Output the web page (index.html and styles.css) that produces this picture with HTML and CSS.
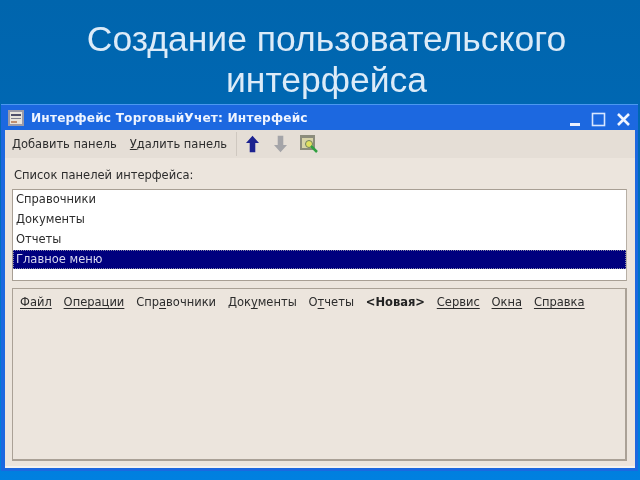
FILE: index.html
```html
<!DOCTYPE html>
<html lang="ru">
<head>
<meta charset="utf-8">
<title>Создание пользовательского интерфейса</title>
<link rel="stylesheet" href="styles.css">
</head>
<body>
<div class="slide">
  <h1 class="slide-title">Создание пользовательского интерфейса</h1>
  <div class="window">
    <div class="titlebar">
      <svg class="app-icon" width="16" height="16" viewBox="0 0 16 16"><rect width="16" height="16" fill="#9a9aa8"/><rect x="2" y="2" width="12" height="12" fill="#e8e4dc"/><rect x="3" y="4" width="10" height="2" fill="#50506a"/><rect x="3" y="8" width="10" height="1" fill="#80808c"/><rect x="3" y="11" width="6" height="2" fill="#c09070"/></svg>
      <span class="titlebar-text">Интерфейс ТорговыйУчет: Интерфейс</span>
      <div class="win-controls">
        <svg width="76" height="22" viewBox="0 0 76 22"><rect x="11" y="16" width="10" height="3" fill="#e8f0ff"/><rect x="33.5" y="6.5" width="12" height="12" fill="none" stroke="#d8e6ff" stroke-width="1.6"/><path d="M59 7 L70 18 M70 7 L59 18" stroke="#f0f5ff" stroke-width="2.6"/></svg>
      </div>
    </div>
    <div class="client">
      <div class="toolbar">
        <span class="tool"><u>Д</u>обавить панель</span>
        <span class="tool"><u>У</u>далить панель</span>
        <span class="sep"></span>
        <svg class="tbicon" width="13" height="18" viewBox="0 0 14 18"><path d="M7 0 L14 8 H10 V18 H4 V8 H0 Z" fill="#1c2290"/></svg>
        <svg class="tbicon" width="13" height="18" viewBox="0 0 14 18"><path d="M7 18 L14 10 H10 V0 H4 V10 H0 Z" fill="#a4a4a8"/></svg>
        <svg class="tbicon" width="20" height="20" viewBox="0 0 20 20"><rect x="1" y="1" width="15" height="15" fill="#8c8c7c"/><rect x="3" y="4" width="11" height="10" fill="#d8d4a8"/><circle cx="10" cy="10" r="3.5" fill="#e0e060" stroke="#708060"/><path d="M12 12 L18 18" stroke="#30a040" stroke-width="2.5"/></svg>
      </div>
      <div class="list-section">
        <div class="list-label">Список панелей интерфейса:</div>
        <div class="listbox">
          <div class="list-item">Справочники</div>
          <div class="list-item">Документы</div>
          <div class="list-item">Отчеты</div>
          <div class="list-item selected">Главное меню</div>
        </div>
      </div>
      <div class="menu-panel">
        <span class="menu-item">Файл</span>
        <span class="menu-item">Операции</span>
        <span class="menu-item plain">Спр<u>а</u>вочники</span>
        <span class="menu-item plain">Док<u>у</u>менты</span>
        <span class="menu-item plain">О<u>т</u>четы</span>
        <span class="menu-item new">&lt;Новая&gt;</span>
        <span class="menu-item">Сервис</span>
        <span class="menu-item">Окна</span>
        <span class="menu-item">Справка</span>
      </div>
    </div>
  </div>
</div>
</body>
</html>
```

FILE: styles.css
```css
* { box-sizing: border-box; }
html, body { margin: 0; padding: 0; }
body { width: 640px; height: 480px; overflow: hidden; }
.slide {
  width: 640px; height: 480px;
  display: flex; flex-direction: column;
  background: linear-gradient(180deg, #0065ad 0%, #0068b4 30%, #0080e0 100%);
  font-family: "Liberation Sans", Arial, sans-serif;
}
.slide-title {
  margin: 0; height: 104px; padding-top: 19px;
  font-size: 35.5px; line-height: 41px; font-weight: 400;
  color: #dcebf8; text-align: center;
  padding-left: 80px; padding-right: 67px;
  filter: blur(0.3px);
}
.window {
  margin-left: 1px; width: 637px; height: 367px;
  background: #1c68e0;
  border-top: 1px solid #4a98f0;
  display: flex; flex-direction: column;
  padding: 0 3px 3px 4px;
  filter: blur(0.4px);
}
.titlebar {
  height: 25px; flex: none;
  display: flex; align-items: center; padding-left: 3px;
  color: #eef4ff;
}
.app-icon { flex: none; margin-right: 7px; }
.titlebar-text { font: 700 12.2px "DejaVu Sans", sans-serif; white-space: nowrap; letter-spacing: 0.16px; }
.win-controls { margin-left: auto; display: flex; }
.client {
  flex: 1; display: flex; flex-direction: column;
  background: #ece5dd;
  font-family: "DejaVu Sans", sans-serif; font-size: 11.5px; color: #2c2c2c;
  border-bottom: 2px solid #f4f2ee;
}
.toolbar {
  height: 28px; flex: none; display: flex; align-items: center;
  background: #e5ded6; padding-left: 7px;
}
.tool { margin-right: 13px; white-space: nowrap; }
.sep { width: 1px; height: 24px; background: #cfc8c0; margin: 0 9px 0 -4px; }
.tbicon { flex: none; margin-right: 15px; }
.tbicon:last-child { margin-right: 0; margin-left: -3px; }
.list-section { padding: 9px 8px 0 7px; flex: none; }
.list-label { height: 22px; line-height: 16px; padding-left: 2px; }
.listbox {
  height: 92px; background: #fff;
  border: 1px solid #a89f94; border-right-color: #b8b0a6;
}
.list-item { height: 20px; line-height: 19px; padding-left: 3px; }
.list-item.selected { height: 19px; background: #00007e; color: #d8d8f0; outline: 1px dotted #8888a8; outline-offset: -1px; }
.menu-panel {
  flex: 1; margin: 7px 8px 5px 7px;
  border: 1px solid #aaa196;
  border-right-width: 2px; border-bottom-width: 2px;
  padding: 3px 0 0 7px;
  display: flex; align-items: flex-start; gap: 11.8px;
  line-height: 20px;
}
.menu-item { text-decoration: underline; text-underline-offset: 2px; white-space: nowrap; }
.menu-item.plain { text-decoration: none; }
.menu-item.new { text-decoration: none; font-weight: 700; color: #222; }
```
